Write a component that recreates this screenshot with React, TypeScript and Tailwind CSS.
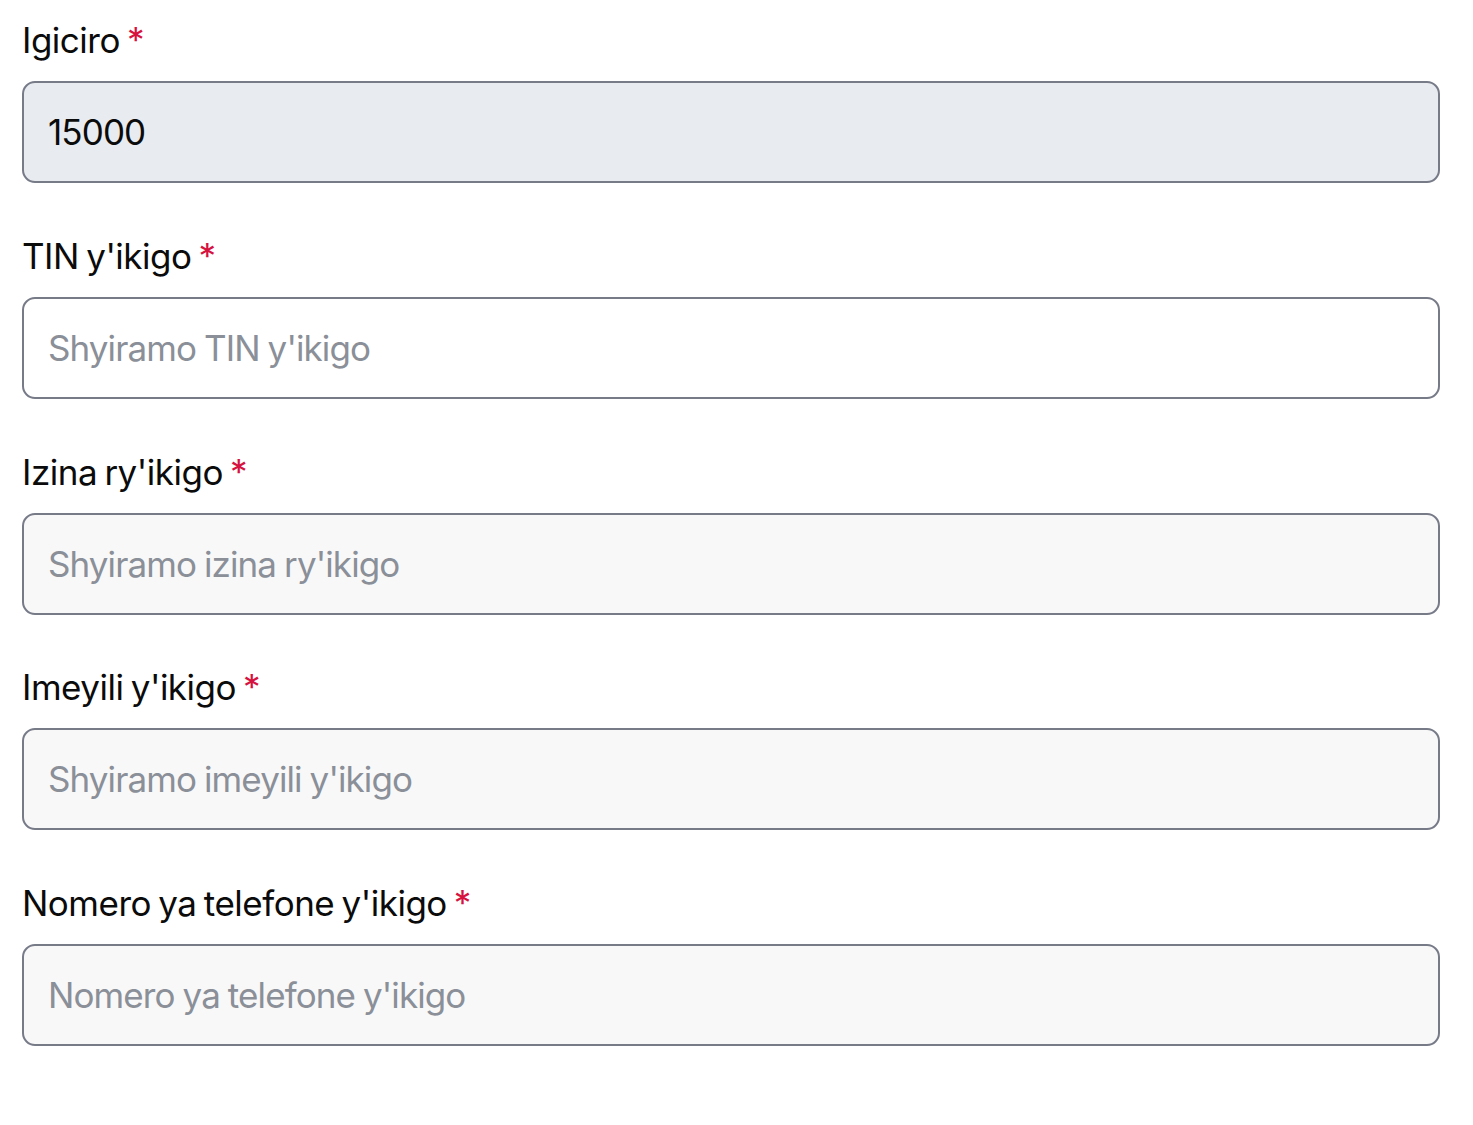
const fields = [
  { label: 'Igiciro', value: '15000', placeholder: '', bg: 'bg-[#e8ebef]' },
  { label: "TIN y'ikigo", value: '', placeholder: "Shyiramo TIN y'ikigo", bg: 'bg-white' },
  { label: "Izina ry'ikigo", value: '', placeholder: "Shyiramo izina ry'ikigo", bg: 'bg-[#f8f8f9]' },
  { label: "Imeyili y'ikigo", value: '', placeholder: "Shyiramo imeyili y'ikigo", bg: 'bg-[#f8f8f9]' },
  { label: "Nomero ya telefone y'ikigo", value: '', placeholder: "Nomero ya telefone y'ikigo", bg: 'bg-[#f8f8f9]' },
];

export default function App() {
  return (
    <div className="min-h-screen bg-white px-[22px] pt-[14px] font-['Inter',sans-serif]">
      <div className="flex flex-col gap-[46.75px] w-[1418px]">
        {fields.map((f) => (
          <div key={f.label} className="flex flex-col gap-[15px]">
            <label className="flex items-baseline text-[35px] leading-[52px] text-[#0b0b0b] tracking-[-0.5px] [word-spacing:-2px]">
              {f.label}
              <span className="ml-[7px] text-[#d6123f]">*</span>
            </label>
            <input
              readOnly
              defaultValue={f.value}
              placeholder={f.placeholder}
              className={`h-[102px] w-full rounded-[13px] border-2 border-[#777b88] px-[24px] text-[35px] tracking-[-0.9px] [word-spacing:-1px] text-[#0b0b0b] placeholder:text-[#8a8f98] outline-none ${f.bg}`}
            />
          </div>
        ))}
      </div>
    </div>
  );
}
